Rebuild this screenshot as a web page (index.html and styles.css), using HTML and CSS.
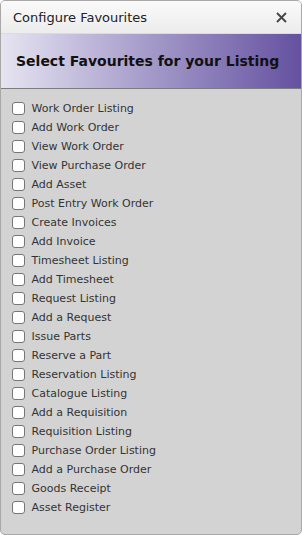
FILE: index.html
```html
<!DOCTYPE html>
<html lang="en">
<head>
    <meta charset="UTF-8">
    <title>Configure Favourites</title>
    <link rel="stylesheet" href="styles.css">
</head>
<body>
    <div class="dialog">
        <div class="titlebar">
            <span class="title">Configure Favourites</span>
            <button class="close-button" aria-label="Close">
                <svg width="11" height="11" viewBox="0 0 11 11"><path d="M1 1L10 10M10 1L1 10" stroke="#444" stroke-width="1.8"/></svg>
            </button>
        </div>
        <div class="banner">
            <h1>Select Favourites for your Listing</h1>
        </div>
        <ul class="fav-list">
            <li><label><input type="checkbox"> Work Order Listing</label></li>
            <li><label><input type="checkbox"> Add Work Order</label></li>
            <li><label><input type="checkbox"> View Work Order</label></li>
            <li><label><input type="checkbox"> View Purchase Order</label></li>
            <li><label><input type="checkbox"> Add Asset</label></li>
            <li><label><input type="checkbox"> Post Entry Work Order</label></li>
            <li><label><input type="checkbox"> Create Invoices</label></li>
            <li><label><input type="checkbox"> Add Invoice</label></li>
            <li><label><input type="checkbox"> Timesheet Listing</label></li>
            <li><label><input type="checkbox"> Add Timesheet</label></li>
            <li><label><input type="checkbox"> Request Listing</label></li>
            <li><label><input type="checkbox"> Add a Request</label></li>
            <li><label><input type="checkbox"> Issue Parts</label></li>
            <li><label><input type="checkbox"> Reserve a Part</label></li>
            <li><label><input type="checkbox"> Reservation Listing</label></li>
            <li><label><input type="checkbox"> Catalogue Listing</label></li>
            <li><label><input type="checkbox"> Add a Requisition</label></li>
            <li><label><input type="checkbox"> Requisition Listing</label></li>
            <li><label><input type="checkbox"> Purchase Order Listing</label></li>
            <li><label><input type="checkbox"> Add a Purchase Order</label></li>
            <li><label><input type="checkbox"> Goods Receipt</label></li>
            <li><label><input type="checkbox"> Asset Register</label></li>
        </ul>
    </div>
</body>
</html>
```

FILE: styles.css
```css
html, body {
    margin: 0;
    padding: 0;
    height: 100%;
    background-color: #fff;
}
body {
    font-family: 'DejaVu Sans', Verdana, sans-serif;
    color: #333;
}
.dialog {
    box-sizing: border-box;
    height: 535px;
    border: 1px solid #a8a8a8;
    border-radius: 5px;
    background-color: #d3d3d3;
    overflow: hidden;
    display: flex;
    flex-direction: column;
}
.titlebar {
    height: 32px;
    display: flex;
    align-items: center;
    justify-content: space-between;
    padding: 0 14px 0 12px;
    background: linear-gradient(to bottom, #fafafa, #ececec);
    border-bottom: 1px solid #dcdcdc;
}
.title {
    font-size: 13px;
    color: #222;
}
.close-button {
    border: none;
    background: none;
    padding: 0;
    width: 11px;
    height: 11px;
    display: flex;
    cursor: pointer;
}
.banner {
    height: 54px;
    display: flex;
    align-items: center;
    padding: 0 15px;
    background: linear-gradient(to right, #e6e4f1, #aaa1cd 45%, #6551a0);
    border-bottom: 1px solid #7c7c7c;
}
.banner h1 {
    margin: 0;
    font-size: 14px;
    font-weight: bold;
    color: #111;
    white-space: nowrap;
}
.fav-list {
    list-style: none;
    margin: 0;
    padding: 10px 0 0 10px;
}
.fav-list li {
    height: 19px;
    display: flex;
    align-items: center;
}
.fav-list label {
    display: flex;
    align-items: center;
    font-size: 11px;
    color: #333;
    white-space: pre;
}
.fav-list input {
    appearance: none;
    width: 13px;
    height: 13px;
    margin: 0 3px 0 1px;
    border: 1px solid #767676;
    border-radius: 3px;
    background-color: #fff;
}
```
